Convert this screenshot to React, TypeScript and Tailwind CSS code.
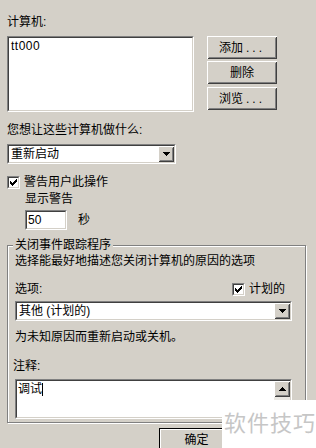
const font = "font-['Liberation_Sans','Noto_Sans_CJK_SC',sans-serif]"

const raised =
  'bg-[#d4d0c8] shadow-[inset_1px_1px_0_#ffffff,inset_-1px_-1px_0_#404040,inset_2px_2px_0_#d4d0c8,inset_-2px_-2px_0_#808080]'

function Sunken({ className, children }: { className?: string; children?: React.ReactNode }) {
  return (
    <div className={`border border-t-[#808080] border-l-[#808080] border-b-white border-r-white ${className ?? ''}`}>
      <div className="h-full w-full border border-t-[#404040] border-l-[#404040] border-b-[#d4d0c8] border-r-[#d4d0c8] bg-white">
        {children}
      </div>
    </div>
  )
}

function Arrow({ up }: { up?: boolean }) {
  return (
    <svg width="7" height="4" viewBox="0 0 7 4" shapeRendering="crispEdges">
      <polygon points={up ? '3.5,0 7,4 0,4' : '0,0 7,0 3.5,4'} fill="#000" />
    </svg>
  )
}

function Combo({ value, className }: { value: string; className: string }) {
  return (
    <Sunken className={`h-[20px] ${className}`}>
      <div className="flex h-full items-center">
        <span className="flex-1 pl-[2px] leading-[16px]">{value}</span>
        <div className={`flex h-[16px] w-[16px] items-center justify-center ${raised}`}>
          <Arrow />
        </div>
      </div>
    </Sunken>
  )
}

function Check() {
  return (
    <Sunken className="h-[13px] w-[13px]">
      <svg width="9" height="9" viewBox="0 0 9 9" shapeRendering="crispEdges">
        <path d="M1 3v3l2 2 5-5V0L3 5z" fill="#000" />
      </svg>
    </Sunken>
  )
}

function Button({ label, dots }: { label: string; dots?: boolean }) {
  return (
    <div className={`flex h-[23px] w-[70px] items-center justify-center ${raised}`}>
      {label}
      {dots && <span className="ml-[3px] tracking-[3px]">...</span>}
    </div>
  )
}

export default function App() {
  return (
    <div className={`relative h-[448px] w-[316px] overflow-hidden bg-[#d4d0c8] pl-[7px] text-[12px] leading-[16px] text-black ${font}`}>
      <div className="pt-[14px]">计算机:</div>
      <div className="mt-[6px] flex">
        <Sunken className="h-[76px] w-[187px]">
          <div className="pl-[2px] tracking-[0.5px]">tt000</div>
        </Sunken>
        <div className="ml-[13px] flex flex-col">
          <Button label="添加" dots />
          <div className="mt-[2px]">
            <Button label="删除" />
          </div>
          <div className="mt-[3px]">
            <Button label="浏览" dots />
          </div>
        </div>
      </div>

      <div className="mt-[10px]">您想让这些计算机做什么:</div>
      <Combo value="重新启动" className="mt-[6px] w-[169px]" />

      <div className="mt-[10px] flex h-[16px] items-center gap-[4px]">
        <Check />
        <span>警告用户此操作</span>
      </div>
      <div className="mt-[1px] pl-[18px]">显示警告</div>
      <div className="mt-[3px] flex items-center pl-[18px]">
        <Sunken className="h-[20px] w-[42px]">
          <div className="pl-[1px] leading-[16px]">50</div>
        </Sunken>
        <span className="ml-[11px]">秒</span>
      </div>

      <fieldset className="mt-[7px] w-[299px] border border-[#808080] px-[7px] pb-[3px] shadow-[inset_1px_1px_0_#ffffff,1px_1px_0_#ffffff]">
        <legend className="-ml-[2px] bg-[#d4d0c8] px-[2px]">关闭事件跟踪程序</legend>
        <div>选择能最好地描述您关闭计算机的原因的选项</div>
        <div className="mt-[12px] flex w-[277px] items-center">
          <span>选项:</span>
          <div className="ml-auto mr-[7px] flex items-center gap-[4px]">
            <Check />
            <span>计划的</span>
          </div>
        </div>
        <Combo value="其他 (计划的)" className="mt-[4px] w-[277px]" />
        <div className="mt-[8px]">为未知原因而重新启动或关机。</div>
        <div className="-ml-[2px] mt-[13px]">注释:</div>
        <Sunken className="mt-[5px] h-[40px] w-[277px]">
          <div className="flex h-full">
            <div className="flex flex-1 items-start pl-[1px]">
              <span>调试</span>
              <span className="mt-[2px] h-[13px] w-px bg-black" />
            </div>
            <div className="flex w-[16px] flex-col">
              <div className={`flex h-[16px] w-[16px] items-center justify-center ${raised}`}>
                <Arrow up />
              </div>
              <div className="flex-1 bg-[#eae8e3]" />
            </div>
          </div>
        </Sunken>
      </fieldset>

      <div className="ml-[152px] mt-[5px] w-[75px] border border-black">
        <div className={`flex h-[21px] items-center justify-center ${raised}`}>确定</div>
      </div>

      <div className="absolute left-[222px] top-[400px] h-[48px] w-[94px] bg-white pl-[2px] pt-[12px] text-[22px] leading-[24px] tracking-[1px] text-[#c6c6c6]">
        软件技巧
      </div>
    </div>
  )
}
